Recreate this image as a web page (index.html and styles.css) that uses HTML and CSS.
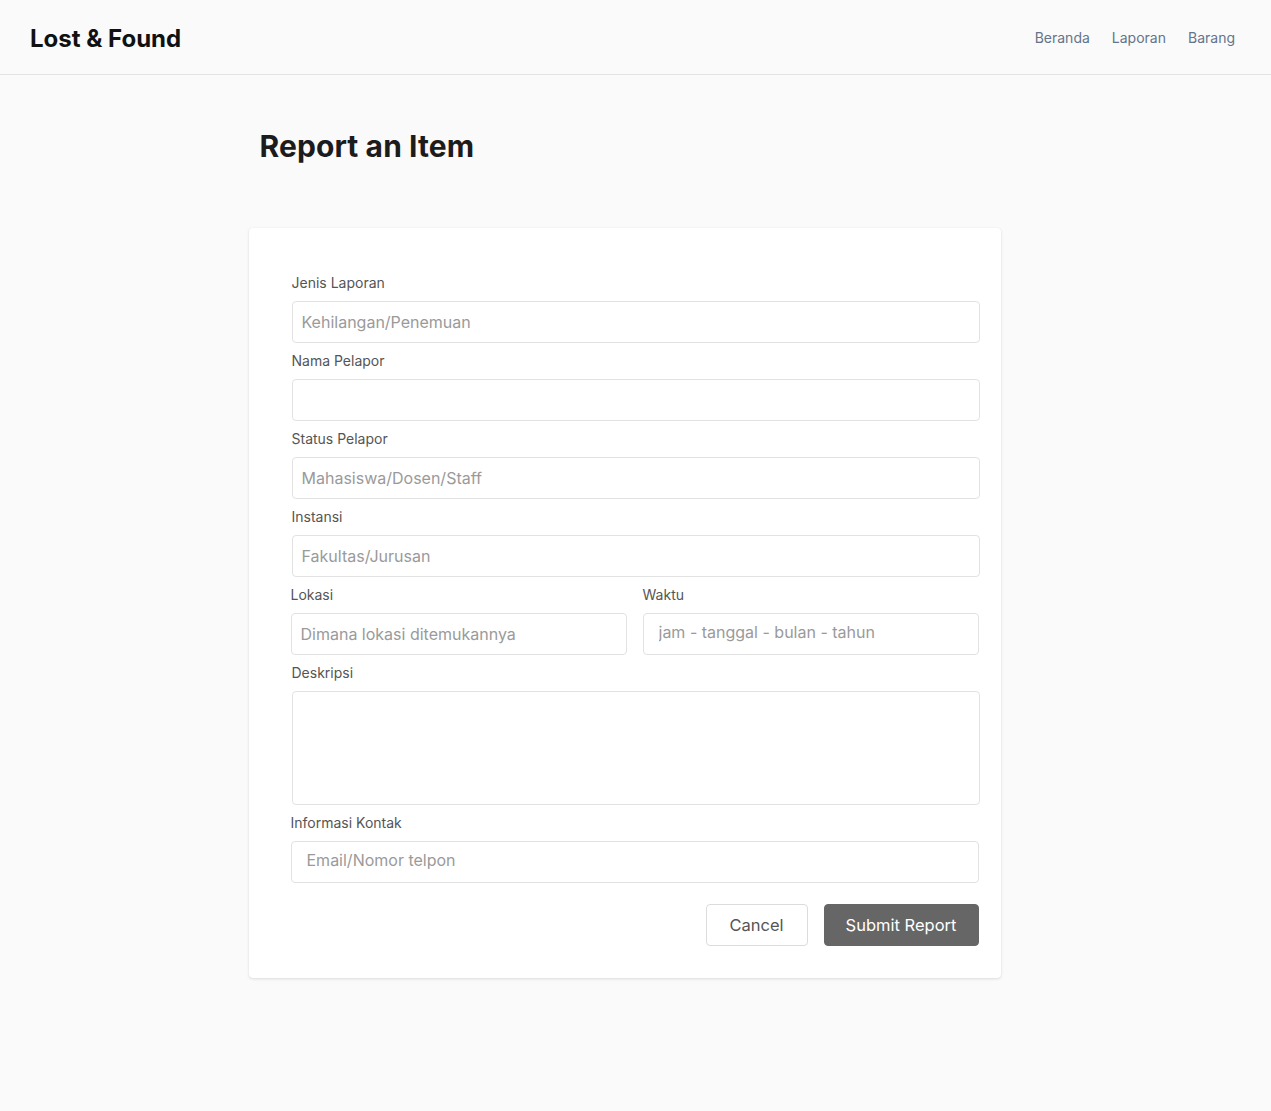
FILE: index.html
```html
<!DOCTYPE html>
<html lang="id">
<head>
<meta charset="utf-8">
<title>Lost &amp; Found</title>
<link rel="stylesheet" href="styles.css">
</head>
<body>
<header class="topbar">
  <div class="brand">Lost &amp; Found</div>
  <nav class="nav">
    <a href="#">Beranda</a>
    <a href="#">Laporan</a>
    <a href="#">Barang</a>
  </nav>
</header>
<main class="main">
  <h1 class="title">Report an Item</h1>
  <form class="card">
    <div class="field">
      <label class="label">Jenis Laporan</label>
      <input class="input" type="text" placeholder="Kehilangan/Penemuan">
    </div>
    <div class="field">
      <label class="label">Nama Pelapor</label>
      <input class="input" type="text">
    </div>
    <div class="field">
      <label class="label">Status Pelapor</label>
      <input class="input" type="text" placeholder="Mahasiswa/Dosen/Staff">
    </div>
    <div class="field">
      <label class="label">Instansi</label>
      <input class="input" type="text" placeholder="Fakultas/Jurusan">
    </div>
    <div class="row">
      <div class="field">
        <label class="label">Lokasi</label>
        <input class="input" type="text" placeholder="Dimana lokasi ditemukannya">
      </div>
      <div class="field">
        <label class="label">Waktu</label>
        <input class="input input-wide" type="text" placeholder="jam - tanggal - bulan - tahun">
      </div>
    </div>
    <div class="field">
      <label class="label">Deskripsi</label>
      <textarea class="input textarea"></textarea>
    </div>
    <div class="field contact">
      <label class="label">Informasi Kontak</label>
      <input class="input input-wide" type="text" placeholder="Email/Nomor telpon">
    </div>
    <div class="actions">
      <button type="button" class="btn btn-cancel">Cancel</button>
      <button type="button" class="btn btn-submit">Submit Report</button>
    </div>
  </form>
</main>
</body>
</html>
```
FILE: styles.css
```css
* { box-sizing: border-box; }
html, body { margin: 0; padding: 0; }
body {
  background: #fafafa;
  font-family: Inter, "Noto Sans", sans-serif;
  color: #1a1a1a;
  min-height: 1111px;
}
.topbar {
  height: 75px;
  border-bottom: 1px solid #e3e3e3;
  display: flex;
  align-items: center;
  justify-content: space-between;
  padding: 0 36px 0 30px;
}
.brand {
  font-size: 24px;
  font-weight: 700;
  color: #111;
  padding-top: 3px;
}
.nav { display: flex; gap: 22px; }
.nav a {
  font-size: 14px;
  color: #64748b;
  text-decoration: none;
}
.main {
  width: 752px;
  margin: 0 auto;
  padding-top: 51px;
  position: relative;
  left: -11px;
}
.title {
  margin: 0 0 62px 11px;
  font-size: 30px;
  font-weight: 700;
  color: #1c1c1c;
  line-height: 40px;
  letter-spacing: 0.1px;
}
.card {
  background: #fff;
  border-radius: 4px;
  box-shadow: 0 1px 3px rgba(0,0,0,0.12), 0 0 1px rgba(0,0,0,0.06);
  padding: 45px 21px 32px 43px;
  display: flex;
  flex-direction: column;
}
.field { display: flex; flex-direction: column; }
.label {
  font-size: 14px;
  line-height: 20px;
  color: #555;
  margin-bottom: 8px;
}
.input {
  height: 42px;
  width: 100%;
  border: 1px solid #e2e2e2;
  border-radius: 4px;
  background: #fff;
  padding: 0 9px 1px;
  font-family: Inter, "Noto Sans", sans-serif;
  font-size: 16px;
  color: #333;
  margin-bottom: 8px;
  outline: none;
}
.input::placeholder { color: #9a9a9a; }
.input-wide { padding: 0 15px 5px; }
.textarea {
  height: 114px;
  resize: none;
  display: block;
}
.row {
  display: grid;
  grid-template-columns: 336px 336px;
  column-gap: 16px;
  margin-left: -1px;
}
.contact { margin-left: -1px; margin-right: 1px; }
.contact .input { margin-bottom: 21px; }
.actions {
  display: flex;
  justify-content: flex-end;
  gap: 16px;
  margin-right: 1px;
}
.btn {
  height: 42px;
  border-radius: 4px;
  font-family: Inter, "Noto Sans", sans-serif;
  font-size: 16.5px;
  cursor: pointer;
}
.btn-cancel {
  width: 102px;
  background: #fff;
  border: 1px solid #dcdcdc;
  color: #555;
}
.btn-submit {
  width: 155px;
  background: #666;
  border: 1px solid #666;
  color: #fff;
}
```
